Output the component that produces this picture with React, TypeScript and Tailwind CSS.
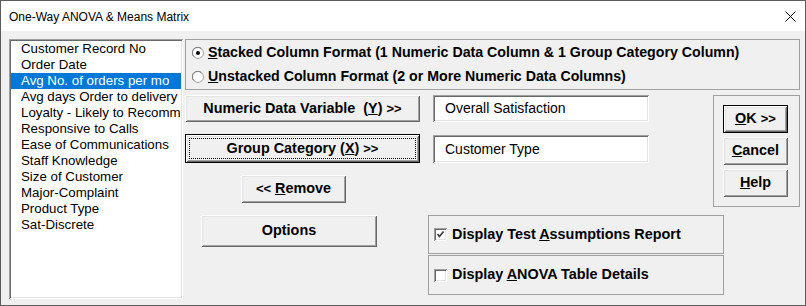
import React from "react";
import clsx from "clsx";

const fields = [
  "Customer Record No",
  "Order Date",
  "Avg No. of orders per mo",
  "Avg days Order to delivery",
  "Loyalty - Likely to Recomm",
  "Responsive to Calls",
  "Ease of Communications",
  "Staff Knowledge",
  "Size of Customer",
  "Major-Complaint",
  "Product Type",
  "Sat-Discrete",
];

const raised =
  "shadow-[inset_1px_1px_0_#ffffff,inset_-1px_-1px_0_#696969,inset_2px_2px_0_#e3e3e3,inset_-2px_-2px_0_#a0a0a0]";
const sunken =
  "shadow-[inset_1px_1px_0_#a0a0a0,inset_-1px_-1px_0_#ffffff,inset_2px_2px_0_#696969,inset_-2px_-2px_0_#e3e3e3]";

function Btn({
  children,
  isDefault,
  focused,
  className,
}: {
  children: React.ReactNode;
  isDefault?: boolean;
  focused?: boolean;
  className?: string;
}) {
  return (
    <div
      className={clsx(
        "relative flex items-center justify-center bg-[#f0f0f0] text-[14.4px] font-bold text-black whitespace-pre select-none",
        isDefault && "border border-black",
        className
      )}
    >
      <div className={clsx("absolute inset-0", raised)} />
      {focused && <div className="absolute inset-[3px] border border-dotted border-black" />}
      <span className="relative">{children}</span>
    </div>
  );
}

function Chevrons() {
  return <span className="text-[13px]">&gt;&gt;</span>;
}

function Radio({ checked }: { checked?: boolean }) {
  return (
    <svg width="12" height="12" viewBox="0 0 12 12" className="shrink-0">
      <circle cx="6" cy="6" r="5.5" fill="#ffffff" stroke="#a0a0a0" />
      <path d="M1.8 9.5 A5 5 0 0 1 9.5 1.8" fill="none" stroke="#696969" strokeWidth="0.8" />
      {checked && <circle cx="6" cy="6" r="2" fill="#000000" />}
    </svg>
  );
}

function Check({ checked }: { checked?: boolean }) {
  return (
    <div className={clsx("relative w-[13px] h-[13px] shrink-0 bg-white", sunken)}>
      {checked && (
        <svg width="13" height="13" viewBox="0 0 13 13" className="absolute inset-0">
          <polyline points="3.5,6 5.5,8.5 9.5,3.5" fill="none" stroke="#3a3a3a" strokeWidth="1.7" />
        </svg>
      )}
    </div>
  );
}

export default function App() {
  return (
    <div className="w-[806px] h-[306px] flex flex-col border border-[#5c5c5c] bg-[#f0f0f0] font-['Liberation_Sans',Arial,sans-serif] text-black overflow-hidden">
      {/* Title bar */}
      <div className="h-[30px] shrink-0 flex items-center bg-white pl-[8px] pr-[9px]">
        <span className="text-[12px] pt-[1px]">One-Way ANOVA &amp; Means Matrix</span>
        <svg width="11" height="11" viewBox="0 0 11 11" className="ml-auto">
          <path d="M0.5 0.5 L10.5 10.5 M10.5 0.5 L0.5 10.5" stroke="#000" strokeWidth="1" />
        </svg>
      </div>

      {/* Body */}
      <div className="flex gap-[2px] pl-[8px] pt-[8px]">
        {/* Field list */}
        <div className={clsx("w-[174px] h-[260px] bg-white p-[2px]", sunken)}>
          {fields.map((f, i) => (
            <div
              key={f}
              className={clsx(
                "h-[16px] leading-[16px] pl-[10px] text-[13.3px] whitespace-nowrap overflow-hidden",
                i === 2 ? "bg-[#0078d7] text-white" : "text-black"
              )}
            >
              {f}
            </div>
          ))}
        </div>

        <div className="w-[615px] flex flex-col">
          {/* Format radio group */}
          <div className="h-[51px] border border-[#a0a0a0] pl-[6px] pt-[1px] flex flex-col text-[14.2px] font-bold">
            <div className="h-[24px] flex items-center gap-[4px]">
              <Radio checked />
              <span>
                <u>S</u>tacked Column Format (1 Numeric Data Column &amp; 1 Group Category Column)
              </span>
            </div>
            <div className="h-[24px] flex items-center gap-[4px]">
              <Radio />
              <span>
                <u>U</u>nstacked Column Format (2 or More Numeric Data Columns)
              </span>
            </div>
          </div>

          {/* Variables row */}
          <div className="mt-[5px] flex">
            <div className="w-[235px] flex flex-col">
              <Btn className="h-[27px]">
                Numeric Data Variable  (<u>Y</u>) <Chevrons />
              </Btn>
              <Btn isDefault focused className="h-[29px] mt-[12px]">
                Group Category (<u>X</u>) <Chevrons />
              </Btn>
              <Btn className="h-[28px] w-[105px] ml-[56px] mt-[12px]">
                <span className="text-[13px]">&lt;&lt;</span> <u>R</u>emove
              </Btn>
            </div>

            <div className="ml-[13px] w-[216px] flex flex-col text-[14px]">
              <div className={clsx("h-[27px] bg-white flex items-center pl-[12px]", sunken)}>
                Overall Satisfaction
              </div>
              <div className={clsx("h-[28px] mt-[13px] bg-white flex items-center pl-[12px]", sunken)}>
                Customer Type
              </div>
            </div>

            <div className="ml-auto w-[87px] h-[112px] border border-[#a0a0a0] pl-[9px] pt-[9px] flex flex-col gap-[4px]">
              <Btn isDefault className="w-[65px] h-[28px]">
                <span>
                  <u>O</u>K <Chevrons />
                </span>
              </Btn>
              <Btn className="w-[65px] h-[28px]">
                <span>
                  <u>C</u>ancel
                </span>
              </Btn>
              <Btn className="w-[65px] h-[28px]">
                <span>
                  <u>H</u>elp
                </span>
              </Btn>
            </div>
          </div>

          {/* Options row */}
          <div className="mt-[8px] flex">
            <Btn className="ml-[16px] w-[176px] h-[32px]">Options</Btn>
            <div className="ml-[51px] w-[296px] flex flex-col gap-[1px] text-[14.4px] font-bold">
              <div className="h-[39px] border border-[#a0a0a0] pl-[5px] flex items-center gap-[5px]">
                <Check checked />
                <span>
                  Display Test <u>A</u>ssumptions Report
                </span>
              </div>
              <div className="h-[40px] border border-[#a0a0a0] pl-[5px] flex items-center gap-[5px]">
                <Check />
                <span>
                  Display <u>A</u>NOVA Table Details
                </span>
              </div>
            </div>
          </div>
        </div>
      </div>
    </div>
  );
}
